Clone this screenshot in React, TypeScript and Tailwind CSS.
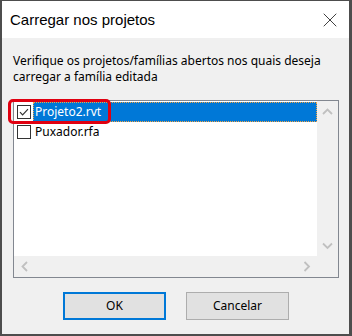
import { X } from "lucide-react";

function Chevron({ dir }: { dir: "up" | "down" | "left" | "right" }) {
  const paths = {
    up: "M1 6 L5.5 1.5 L10 6",
    down: "M1 1.5 L5.5 6 L10 1.5",
    left: "M6 1 L1.5 5.5 L6 10",
    right: "M1.5 1 L6 5.5 L1.5 10",
  };
  const vertical = dir === "up" || dir === "down";
  return (
    <svg
      width={vertical ? 11 : 8}
      height={vertical ? 8 : 11}
      viewBox={vertical ? "0 0 11 8" : "0 0 8 11"}
      fill="none"
      stroke="#c0c0c0"
      strokeWidth={1.8}
    >
      <path d={paths[dir]} />
    </svg>
  );
}

function CheckBox({ checked }: { checked?: boolean }) {
  return (
    <div className="w-[14px] h-[14px] border border-[#333333] bg-white flex items-center justify-center">
      {checked && (
        <svg width="12" height="12" viewBox="0 0 12 12" fill="none" stroke="#333333" strokeWidth={1.2}>
          <path d="M2 6.2 L4.6 8.8 L10 3.2" />
        </svg>
      )}
    </div>
  );
}

export default function App() {
  const items = [
    { name: "Projeto2.rvt", checked: true, selected: true },
    { name: "Puxador.rfa", checked: false, selected: false },
  ];

  return (
    <div
      className="w-[352px] h-[336px] bg-[#4d4d4d] pl-[2px] pr-[3px] pt-px pb-[2px] flex flex-col text-black"
      style={{ fontFamily: '"Noto Sans", "Liberation Sans", sans-serif' }}
    >
      {/* title bar */}
      <div className="h-[37px] bg-white flex items-center justify-between pl-[8px] pr-[7px] shrink-0">
        <span
          className="text-[15px] leading-none"
          style={{ fontFamily: '"Liberation Sans", Arial, sans-serif' }}
        >
          Carregar nos projetos
        </span>
        <X size={24} strokeWidth={0.75} className="text-black" />
      </div>

      {/* body */}
      <div className="flex-1 bg-[#f0f0f0] flex flex-col pl-[11px] pr-[10px] pt-[15px] pb-[14px]">
        <p className="text-[12px] leading-[16px]">
          Verifique os projetos/famílias abertos nos quais deseja
          <br />
          carregar a família editada
        </p>

        {/* list box */}
        <div className="relative mt-[15px] h-[178px] border border-[#828790] bg-white flex flex-col">
          <div className="flex flex-1 min-h-0">
            <div className="flex-1 pt-px flex flex-col">
              {items.map((it) => (
                <div key={it.name} className="h-[20px] flex items-center">
                  <div className="w-[19px] flex justify-center pl-[1px]">
                    <CheckBox checked={it.checked} />
                  </div>
                  <div
                    className={
                      it.selected
                        ? "flex-1 h-full flex items-center pl-[1px] bg-[#0078d7] text-white border border-dotted border-[#f6a542]"
                        : "flex-1 h-full flex items-center pl-[2px]"
                    }
                  >
                    <span className="text-[12px] leading-none">{it.name}</span>
                  </div>
                </div>
              ))}
            </div>
            {/* vertical scrollbar */}
            <div className="w-[21px] bg-[#f0f0f0] flex flex-col justify-between">
              <div className="h-[21px] flex items-center justify-center">
                <Chevron dir="up" />
              </div>
              <div className="h-[21px] flex items-center justify-center">
                <Chevron dir="down" />
              </div>
            </div>
          </div>
          {/* horizontal scrollbar */}
          <div className="h-[21px] bg-[#f0f0f0] flex">
            <div className="flex-1 flex justify-between">
              <div className="w-[21px] flex items-center justify-center">
                <Chevron dir="left" />
              </div>
              <div className="w-[21px] flex items-center justify-center">
                <Chevron dir="right" />
              </div>
            </div>
            <div className="w-[21px]" />
          </div>

          {/* red highlight annotation */}
          <div className="absolute left-[-6px] top-[-2px] w-[103px] h-[25px] border-[3px] border-[#e00010] rounded-[5px]" />
        </div>

        {/* buttons */}
        <div className="mt-[14px] flex justify-center gap-[20px]">
          <button className="w-[103px] h-[28px] bg-[#e1e1e1] border-2 border-[#0078d7] text-[12px]">
            OK
          </button>
          <button className="w-[103px] h-[28px] bg-[#e1e1e1] border border-[#adadad] text-[12px]">
            Cancelar
          </button>
        </div>
      </div>
    </div>
  );
}
